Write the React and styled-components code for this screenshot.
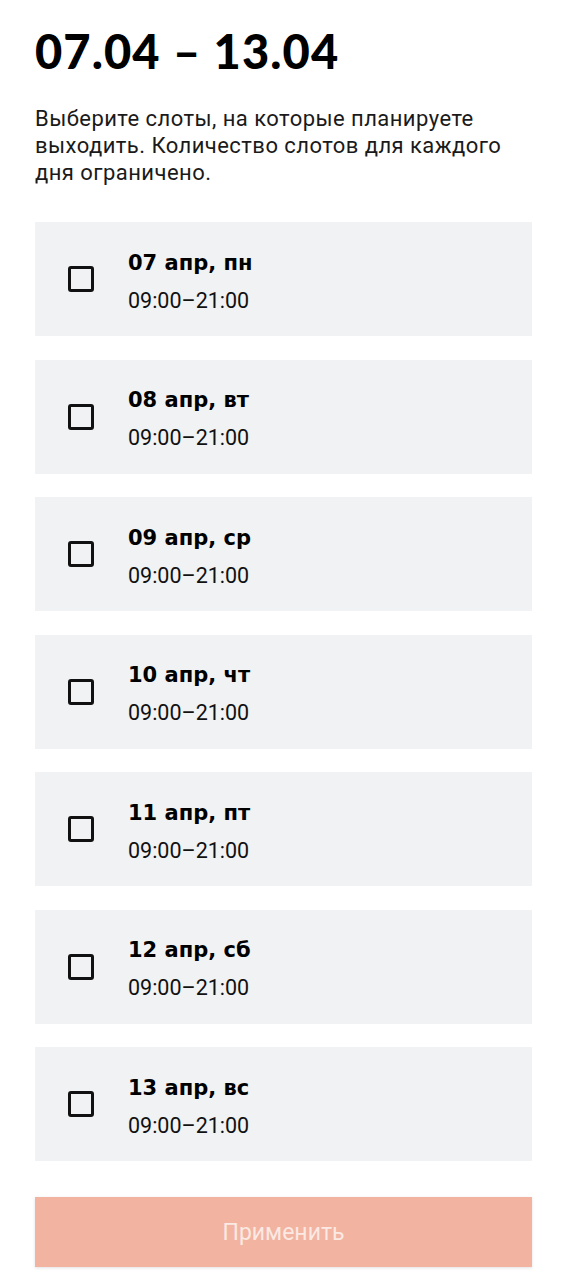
import React, { useState } from 'react'
import styled, { createGlobalStyle } from 'styled-components'

const GlobalStyle = createGlobalStyle`
  html, body {
    margin: 0;
    padding: 0;
    background: #fff;
  }
  body {
    font-family: Roboto, "Liberation Sans", Arial, sans-serif;
    color: #111;
  }
`

const days = [
  '07 апр, пн',
  '08 апр, вт',
  '09 апр, ср',
  '10 апр, чт',
  '11 апр, пт',
  '12 апр, сб',
  '13 апр, вс',
]

function App() {
  const [checked, setChecked] = useState({})

  const toggle = (i) => setChecked((c) => ({ ...c, [i]: !c[i] }))
  const anyChecked = Object.values(checked).some(Boolean)

  return (
    <Page>
      <GlobalStyle />
      <Title>07.04 – 13.04</Title>
      <Description>
        Выберите слоты, на которые планируете выходить. Количество слотов для каждого
        дня ограничено.
      </Description>
      <SlotList>
        {days.map((day, i) => (
          <Slot key={day} onClick={() => toggle(i)}>
            <Checkbox checked={!!checked[i]} />
            <SlotText>
              <SlotDay>{day}</SlotDay>
              <SlotTime>09:00–21:00</SlotTime>
            </SlotText>
          </Slot>
        ))}
      </SlotList>
      <ApplyButton disabled={!anyChecked}>Применить</ApplyButton>
    </Page>
  )
}

const Page = styled.div`
  padding: 23px 35px 12px;
  display: flex;
  flex-direction: column;
`

const Title = styled.h1`
  margin: 0;
  font-family: Lato, "Noto Sans", sans-serif;
  font-weight: 900;
  font-size: 47px;
  line-height: 56px;
  letter-spacing: 1.1px;
  color: #000;
`

const Description = styled.p`
  margin: 26px 0 0;
  font-size: 22px;
  line-height: 27px;
  letter-spacing: 0.45px;
  color: #1a1a1a;
`

const SlotList = styled.div`
  margin-top: 36px;
  display: flex;
  flex-direction: column;
  gap: 23.5px;
`

const Slot = styled.div`
  height: 114px;
  background: #f0f2f4;
  display: flex;
  align-items: center;
  padding-left: 33px;
  cursor: pointer;
`

const Checkbox = styled.span`
  box-sizing: border-box;
  width: 26px;
  height: 26px;
  border: 3px solid #111;
  border-radius: 3px;
  background: ${(p) => (p.checked ? '#111' : 'transparent')};
  flex-shrink: 0;
`

const SlotText = styled.div`
  margin-left: 34px;
  padding-top: 5px;
  display: flex;
  flex-direction: column;
  gap: 12px;
`

const SlotDay = styled.div`
  font-family: "DejaVu Sans", Lato, sans-serif;
  font-weight: 700;
  font-size: 21px;
  line-height: 26px;
  color: #000;
`

const SlotTime = styled.div`
  font-size: 21.5px;
  line-height: 26px;
  color: #111;
`

const ApplyButton = styled.button`
  margin-top: 36px;
  height: 70px;
  border: none;
  background: #f2b3a0;
  color: #fbe9e3;
  font-family: Roboto, "Liberation Sans", sans-serif;
  font-size: 23px;
  box-shadow: 0 1px 3px rgba(0, 0, 0, 0.12);
  cursor: ${(p) => (p.disabled ? 'default' : 'pointer')};
`

export default App
